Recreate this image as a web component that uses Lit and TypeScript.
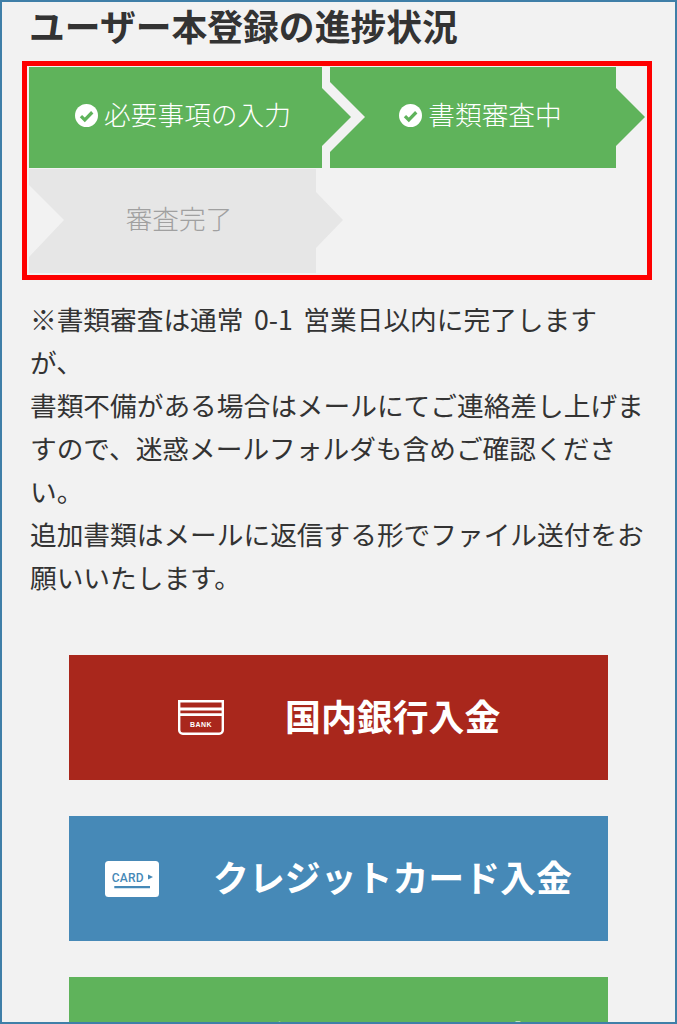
import { LitElement, html, css } from "lit"
import { customElement } from "lit/decorators.js"

const check = html`<svg class="check" viewBox="0 0 24 24">
  <circle cx="12" cy="12" r="12" fill="#fff"></circle>
  <path d="M6.2 12.6l4 4 7.8-8" fill="none" stroke="#5fb35b" stroke-width="3.4"></path>
</svg>`

const bankIcon = html`<svg class="bank" viewBox="0 0 46 35">
  <path d="M1.2 1.2h43.6v29a3.6 3.6 0 0 1-3.6 3.6H4.8a3.6 3.6 0 0 1-3.6-3.6z" fill="none" stroke="#fff" stroke-width="2.4"></path>
  <path d="M1 7.5h44v3H1z M1 13.3h44v2.7H1z" fill="#fff"></path>
  <text x="23" y="26.7" text-anchor="middle" class="bank-label">BANK</text>
</svg>`

const cardIcon = html`<svg class="card" viewBox="0 0 54 36">
  <rect width="54" height="36" rx="3.5" fill="#fff"></rect>
  <text x="6.7" y="20.7" class="card-label">CARD</text>
  <path d="M43 13.5l5 2.5-5 2.5z" fill="#4689b7"></path>
  <path d="M9.3 26.2h35.7" stroke="#4689b7" stroke-width="2.2"></path>
</svg>`

@customElement("app-root")
export class AppRoot extends LitElement {
  static styles = css`
    :host {
      display: block;
      height: 1024px;
      box-sizing: border-box;
      overflow: hidden;
      background: #f2f2f2;
      border: 2px solid #3f7fa8;
      font-family: "Noto Sans CJK JP", "Liberation Sans", sans-serif;
      color: #333;
    }
    h1 {
      margin: 0;
      padding: 0 0 0 27px;
      font-size: 35.8px;
      line-height: 46px;
      font-weight: 700;
    }
    .progress {
      margin: 13px 23px 0 20px;
      height: 219px;
      box-sizing: border-box;
      border: 5px solid #fe0000;
      padding: 1px 2px;
      display: flex;
      flex-wrap: wrap;
      align-content: flex-start;
      row-gap: 1px;
    }
    .step {
      display: flex;
      align-items: center;
      justify-content: center;
      gap: 6px;
      height: 101px;
      padding: 0 14px 4px 0;
      box-sizing: border-box;
      font-size: 26.7px;
      font-weight: 300;
      color: #fff;
      background: #5fb35b;
    }
    .step span {
      margin-bottom: 4px;
    }
    .first {
      width: 322px;
      clip-path: polygon(0 0, 293px 0, 293px 21px, 322px 50px, 293px 79px, 293px 100%, 0 100%);
    }
    .second {
      width: 315px;
      margin-left: -21px;
      clip-path: polygon(0 0, 286px 0, 286px 21px, 315px 50px, 286px 79px, 286px 100%, 0 100%, 0 85px, 35px 50px, 0 15px);
    }
    .third {
      width: 314px;
      height: 104px;
      color: #a0a0a0;
      background: #e6e6e6;
      clip-path: polygon(0 0, 287px 0, 287px 23px, 314px 51px, 287px 79px, 287px 100%, 0 100%, 0 88px, 35px 51px, 0 16px);
    }
    .check {
      width: 23px;
      height: 23px;
      flex: none;
    }
    p {
      margin: 17px 28px 0 28px;
      font-size: 26.7px;
      line-height: 43px;
      word-spacing: 4.5px;
    }
    .payments {
      display: flex;
      flex-direction: column;
      gap: 36px;
      margin: 57px 67px 0;
    }
    .pay {
      display: flex;
      align-items: center;
      height: 125px;
      flex: none;
      font-size: 35.9px;
      font-weight: 700;
      color: #fff;
    }
    .pay span {
      margin-bottom: 5px;
    }
    .bank-pay {
      background: #a9271c;
      padding-left: 109px;
      gap: 61px;
    }
    .card-pay {
      background: #4689b7;
      padding-left: 36px;
      gap: 54px;
    }
    .third-pay {
      background: #5fb35b;
      justify-content: center;
      padding-left: 108px;
    }
    .bank {
      width: 46px;
      height: 35px;
      flex: none;
    }
    .card {
      width: 54px;
      height: 36px;
      flex: none;
    }
    .bank-label {
      font: 700 7px "Liberation Sans", sans-serif;
      letter-spacing: 0.5px;
      fill: #fff;
    }
    .card-label {
      font: 500 12px Roboto, sans-serif;
      letter-spacing: 0.2px;
      fill: #4689b7;
    }
  `

  render() {
    return html`
      <h1>ユーザー本登録の進捗状況</h1>
      <div class="progress">
        <div class="step first">${check}<span>必要事項の入力</span></div>
        <div class="step second">${check}<span>書類審査中</span></div>
        <div class="step third"><span>審査完了</span></div>
      </div>
      <p>
        ※書類審査は通常 0-1 営業日以内に完了しますが、<br />
        書類不備がある場合はメールにてご連絡差し上げますので、迷惑メールフォルダも含めご確認ください。<br />
        追加書類はメールに返信する形でファイル送付をお願いいたします。
      </p>
      <div class="payments">
        <div class="pay bank-pay">${bankIcon}<span>国内銀行入金</span></div>
        <div class="pay card-pay">${cardIcon}<span>クレジットカード入金</span></div>
        <div class="pay third-pay"><span>ビットコイン入金</span></div>
      </div>
    `
  }
}
